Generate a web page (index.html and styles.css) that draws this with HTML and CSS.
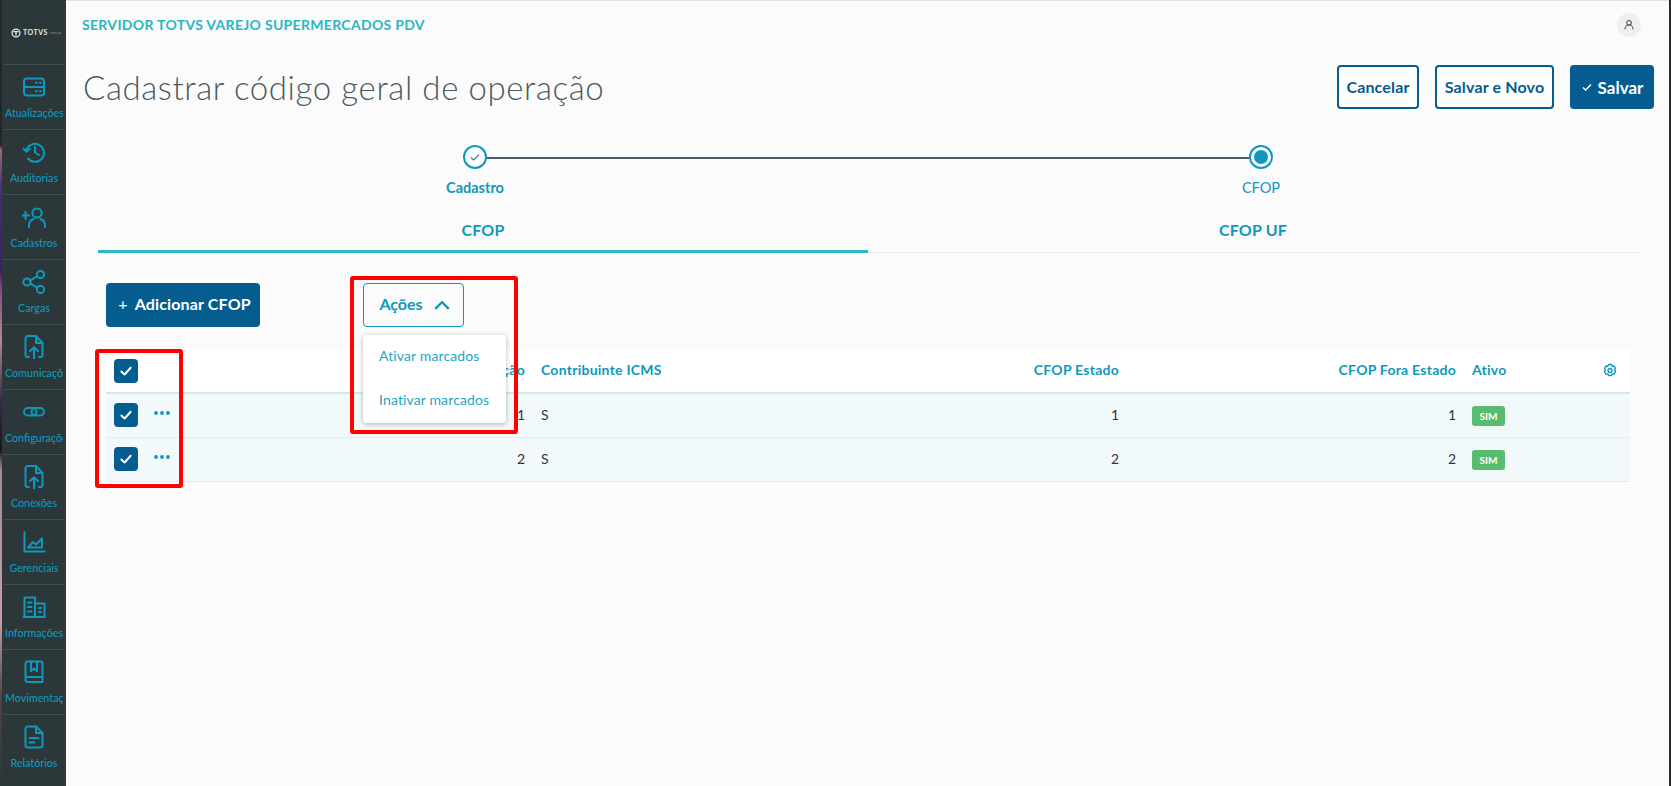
FILE: index.html
```html
<!DOCTYPE html>
<html lang="pt-BR">
<head>
<meta charset="utf-8">
<title>Cadastrar código geral de operação</title>
<link rel="stylesheet" href="styles.css">
</head>
<body>
<div class="wallpaper"></div>
<nav class="sidebar">
  <div class="logo">
    <svg class="logo-mark" viewBox="0 0 10 10"><circle cx="5" cy="5" r="3.9"/><path d="M2.5 3.6h5M5 3.6v4"/></svg>
    <span class="logo-name">TOTVS</span><span class="logo-sub">varejo</span>
  </div>
  <a class="nav-item"><svg viewBox="0 0 24 24"><rect x="2" y="3.5" width="20" height="17" rx="3"/><path d="M2 12h20M14 7.8h1M18 7.8h1M14 16.2h1M18 16.2h1"/></svg><span>Atualizações</span></a>
  <a class="nav-item"><svg viewBox="0 0 24 24"><path d="M4.3 10.5A9 9 0 1 1 6 18.5"/><path d="M1.5 8.5l3 3.2 3.2-3"/><path d="M13 7v5.5l4 2.5"/></svg><span>Auditorias</span></a>
  <a class="nav-item"><svg viewBox="0 0 24 24"><circle cx="15" cy="8" r="4.6"/><path d="M7 22v-1.5a7 7 0 0 1 4.5-6.5M23 22v-1.5a7 7 0 0 0-4.5-6.5M0 10.5h7M3.5 7v7"/></svg><span>Cadastros</span></a>
  <a class="nav-item"><svg viewBox="0 0 24 24"><circle cx="5" cy="12" r="3.6"/><circle cx="18.500" cy="4.600" r="3.600"/><circle cx="18.500" cy="19.400" r="3.600"/><path d="M8.200 10.300l7.100-3.900M8.200 13.700l7.100 3.900"/></svg><span>Cargas</span></a>
  <a class="nav-item"><svg viewBox="0 0 24 24"><path d="M7 22H5.500a2 2 0 0 1-2-2V3a2 2 0 0 1 2-2H14l6.500 7v12a2 2 0 0 1-2 2H17"/><path d="M14 1v7h6.500"/><path d="M12 24V12.500M8 16l4-3.800 4 3.800"/></svg><span>Comunicações</span></a>
  <a class="nav-item"><svg viewBox="0 0 24 24"><rect x="2" y="8" width="12.500" height="7.500" rx="3.700"/><rect x="9.500" y="8" width="12.500" height="7.500" rx="3.700"/></svg><span>Configurações</span></a>
  <a class="nav-item"><svg viewBox="0 0 24 24"><path d="M7 22H5.500a2 2 0 0 1-2-2V3a2 2 0 0 1 2-2H14l6.500 7v12a2 2 0 0 1-2 2H17"/><path d="M14 1v7h6.500"/><path d="M12 24V12.500M8 16l4-3.800 4 3.800"/></svg><span>Conexões</span></a>
  <a class="nav-item"><svg viewBox="0 0 24 24"><path d="M2.500 2v19.500H22.500"/><path d="M6 17.500l5-5.500 3 2.500 6-6v9z"/></svg><span>Gerenciais</span></a>
  <a class="nav-item"><svg viewBox="0 0 24 24"><path d="M2.500 22V2.500h10.500V22zM13 8.500h9.500V22H13M1.500 22h21.500"/><path d="M6 7.500h3.500M6 12h3.500M6 16.500h3.500M17 13h2M17 17h2"/></svg><span>Informações</span></a>
  <a class="nav-item"><svg viewBox="0 0 24 24"><path d="M3.500 19V3.500a2 2 0 0 1 2-2h13a2 2 0 0 1 2 2V22H5.500a2 2 0 0 1-2-2v-1a2 2 0 0 1 2-2h15"/><path d="M9 1.500v9.500l3-2.500 3 2.500V1.500"/></svg><span>Movimentações</span></a>
  <a class="nav-item"><svg viewBox="0 0 24 24"><path d="M5.500 1.500H14l6.500 6.500v12.500a2 2 0 0 1-2 2h-13a2 2 0 0 1-2-2v-17a2 2 0 0 1 2-2z"/><path d="M14 1.500V8h6.500M7.500 13h9M7.500 17.500h5"/></svg><span>Relatórios</span></a>
</nav>

<main class="main">
  <header class="topbar">
    <span class="server-name">SERVIDOR TOTVS VAREJO SUPERMERCADOS PDV</span>
    <span class="avatar"><svg viewBox="0 0 12 12"><circle cx="6" cy="3.800" r="2.300"/><path d="M2 10.500v-.5a4 4 0 0 1 8 0v.5"/></svg></span>
  </header>

  <section class="page-head">
    <h1 class="page-title">Cadastrar código geral de operação</h1>
    <div class="page-actions">
      <button class="btn btn-outline btn-cancel">Cancelar</button>
      <button class="btn btn-outline btn-new">Salvar e Novo</button>
      <button class="btn btn-solid btn-save"><svg class="btn-check" viewBox="0 0 12 12"><path d="M2 6.500l2.700 2.500L10 3.500"/></svg>Salvar</button>
    </div>
  </section>

  <section class="stepper">
    <div class="step-track">
      <span class="step-dot"><svg viewBox="0 0 12 12"><path d="M2 6.500l2.700 2.500L10 3.500"/></svg></span>
      <span class="step-line"></span>
      <span class="step-dot step-dot-active"><i></i></span>
    </div>
    <div class="step-labels">
      <span class="step-label step-label-done">Cadastro</span>
      <span class="step-label">CFOP</span>
    </div>
  </section>

  <div class="tabs">
    <div class="tab tab-active">CFOP</div>
    <div class="tab">CFOP UF</div>
  </div>

  <div class="toolbar">
    <button class="btn btn-solid btn-add"><span class="btn-plus">+</span>Adicionar CFOP</button>
    <div class="actions-wrap">
      <button class="btn-actions">Ações<svg viewBox="0 0 14 8"><path d="M1 7l6-6 6 6"/></svg></button>
      <ul class="menu">
        <li>Ativar marcados</li>
        <li>Inativar marcados</li>
      </ul>
    </div>
  </div>

  <table class="grid">
    <colgroup>
      <col class="c-check"><col class="c-more"><col class="c-code"><col class="c-icms"><col class="c-est"><col class="c-fora"><col class="c-active"><col class="c-gear">
    </colgroup>
    <thead>
      <tr>
        <th><span class="check"><svg viewBox="0 0 12 12"><path d="M2 6.500l2.800 2.500L10 3.200"/></svg></span></th>
        <th></th>
        <th class="num">Código Operação</th>
        <th>Contribuinte ICMS</th>
        <th class="num">CFOP Estado</th>
        <th class="num">CFOP Fora Estado</th>
        <th>Ativo</th>
        <th><svg class="gear" viewBox="0 0 16 16"><path d="M6.500 1.500h3l.7 1.800 1.900-.3 1.500 2.600-1.200 1.400 1.200 1.500-1.500 2.600-1.900-.3-.7 1.700h-3l-.7-1.700-1.900.3-1.500-2.600L3.600 7 2.400 5.600 3.900 3l1.900.3z"/><circle cx="8" cy="7.500" r="2"/></svg></th>
      </tr>
    </thead>
    <tbody>
      <tr>
        <td><span class="check"><svg viewBox="0 0 12 12"><path d="M2 6.500l2.800 2.500L10 3.200"/></svg></span></td>
        <td><svg class="dots" viewBox="0 0 16 16"><circle cx="2" cy="5" r="1.900"/><circle cx="8" cy="5" r="1.900"/><circle cx="14" cy="5" r="1.900"/></svg></td>
        <td class="num">1</td><td>S</td><td class="num">1</td><td class="num">1</td>
        <td><span class="badge">SIM</span></td><td></td>
      </tr>
      <tr>
        <td><span class="check"><svg viewBox="0 0 12 12"><path d="M2 6.500l2.800 2.500L10 3.200"/></svg></span></td>
        <td><svg class="dots" viewBox="0 0 16 16"><circle cx="2" cy="5" r="1.900"/><circle cx="8" cy="5" r="1.900"/><circle cx="14" cy="5" r="1.900"/></svg></td>
        <td class="num">2</td><td>S</td><td class="num">2</td><td class="num">2</td>
        <td><span class="badge">SIM</span></td><td></td>
      </tr>
    </tbody>
  </table>
</main>
<div class="frame-edge"></div>

<div class="mark mark-checks"></div>
<div class="mark mark-actions"></div>
</body>
</html>
```

FILE: styles.css
```css
* { box-sizing: border-box; }
html, body { margin: 0; height: 100%; }
body {
  display: flex;
  width: 1671px;
  height: 786px;
  overflow: hidden;
  position: relative;
  background: #fbfbfb;
  font-family: "Lato", "Noto Sans", sans-serif;
  color: #2c3739;
}

.wallpaper {
  width: 2px;
  flex: none;
  background: linear-gradient(180deg, #20282a 0, #20282a 145px, #9a6a72 150px, #4b2a78 190px, #3a1f6a 270px, #8a4a80 290px, #b08a98 340px, #3a2a4a 400px, #14181a 450px, #a88a90 470px, #c4a0a8 620px, #504048 700px, #2c3739 786px);
}
.frame-edge { width: 2px; flex: none; background: #2b2b2b; }

/* sidebar */
.sidebar {
  width: 64px;
  flex: none;
  background: #2c3739;
  display: flex;
  flex-direction: column;
  padding: 0 1px;
}
.logo {
  height: 65px;
  flex: none;
  border-bottom: 1px solid #414d4f;
  display: flex;
  align-items: center;
  padding-left: 8px;
  padding-top: 1px;
  color: #e4e8e8;
  overflow: hidden;
}
.logo-mark { width: 10px; height: 10px; fill: none; stroke: #e4e8e8; stroke-width: 1.300; flex: none; }
.logo-name { font-size: 7px; font-weight: 700; margin-left: 2px; letter-spacing: .5px; line-height: 1; }
.logo-sub { font-size: 4px; margin-left: 2px; color: #8f9a9b; letter-spacing: .1px; line-height: 1; }
.nav-item {
  height: 65px;
  flex: none;
  border-bottom: 1px solid #414d4f;
  display: flex;
  flex-direction: column;
  align-items: center;
  padding-top: 10px;
  color: #0e98bd;
}
.nav-item:last-child { border-bottom: 0; }
.nav-item svg {
  width: 24px;
  height: 24px;
  flex: none;
  fill: none;
  stroke: #0e98bd;
  stroke-width: 2;
  stroke-linecap: round;
  stroke-linejoin: round;
}
.nav-item span {
  width: 58px;
  margin-top: 6px;
  font-size: 10.700px;
  font-weight: 500;
  line-height: 15px;
  text-align: center;
  white-space: nowrap;
  overflow: hidden;
}

/* main */
.main {
  flex: 1;
  min-width: 0;
  border-top: 1px solid #e2e2e2;
}
.topbar {
  height: 47px;
  display: flex;
  align-items: center;
  justify-content: space-between;
  padding: 0 28px 0 16px;
}
.server-name {
  font-size: 14px;
  font-weight: 700;
  color: #29b6c5;
  letter-spacing: .31px;
}
.avatar {
  width: 24px;
  height: 24px;
  border-radius: 50%;
  background: #efefef;
  display: flex;
  align-items: center;
  justify-content: center;
}
.avatar svg { width: 12px; height: 12px; fill: none; stroke: #555f61; stroke-width: 1.100; }

.page-head {
  display: flex;
  align-items: center;
  justify-content: space-between;
  padding: 17px 15px 0 17px;
}
.page-title {
  margin: 0;
  font-size: 33px;
  font-weight: 300;
  line-height: 44px;
  color: #4a5a5e;
  letter-spacing: .6px;
}
.page-actions { display: flex; gap: 16px; }

.btn {
  height: 44px;
  border-radius: 4px;
  font: 700 16px "Lato", "Noto Sans", sans-serif;
  letter-spacing: .15px;
  display: inline-flex;
  align-items: center;
  justify-content: center;
  padding: 0;
  cursor: pointer;
}
.btn-outline { background: #fff; border: 2px solid #055c8f; color: #055c8f; padding-bottom: 2px; }
.btn-solid { background: #055c8f; border: 0; color: #fff; }
.btn-cancel { width: 82px; }
.btn-new { width: 119px; }
.btn-save { width: 84px; font-size: 17px; letter-spacing: 0; }
.btn-check { width: 12px; height: 12px; margin-right: 5px; fill: none; stroke: #fff; stroke-width: 1.300; }

/* stepper */
.stepper { margin-top: 36px; }
.step-track {
  display: flex;
  align-items: center;
  margin-left: 397px;
  width: 810px;
}
.step-dot {
  width: 24px;
  height: 24px;
  border-radius: 50%;
  border: 2px solid #0e98bd;
  background: #fff;
  flex: none;
  display: flex;
  align-items: center;
  justify-content: center;
}
.step-dot svg { width: 12px; height: 12px; fill: none; stroke: #2f7f9a; stroke-width: 1.100; }
.step-dot-active i { width: 14px; height: 14px; border-radius: 50%; background: #0e98bd; }
.step-line { flex: 1; height: 2px; background: #4a5c66; margin-top: 1px; }
.step-labels {
  display: flex;
  justify-content: space-between;
  margin: 11px 0 0 359px;
  width: 886px;
}
.step-label {
  width: 100px;
  text-align: center;
  font-size: 14.500px;
  line-height: 16px;
  color: #0e98bd;
}
.step-label-done { font-weight: 700; }

/* tabs */
.tabs {
  display: flex;
  margin: 15px 0 0 32px;
  width: 1540px;
}
.tab {
  flex: 1;
  height: 42px;
  padding-top: 9px;
  text-align: center;
  font-size: 16px;
  font-weight: 700;
  line-height: 20px;
  letter-spacing: .2px;
  color: #0e98bd;
  border-bottom: 1px solid #e9ebeb;
}
.tab-active { border-bottom: 3px solid #29b6c5; }

/* toolbar */
.toolbar {
  display: flex;
  align-items: flex-start;
  margin: 30px 0 0 40px;
}
.btn-add { width: 154px; font-size: 16px; padding: 0 0 3px 3px; }
.btn-plus { font-size: 16px; font-weight: 400; margin-right: 7px; }
.actions-wrap { position: relative; margin-left: 103px; }
.btn-actions {
  width: 101px;
  height: 44px;
  background: transparent;
  border: 1px solid #0e98bd;
  border-radius: 4px;
  color: #0e98bd;
  font: 700 16px "Lato", "Noto Sans", sans-serif;
  display: flex;
  align-items: center;
  justify-content: center;
  gap: 11px;
  padding: 0 0 4px 2px;
}
.btn-actions svg { width: 16px; height: 9px; margin-top: 4px; fill: none; stroke: #0e98bd; stroke-width: 2; }
.menu {
  position: absolute;
  top: 52px;
  left: 0;
  z-index: 2;
  width: 143px;
  margin: 0;
  padding: 0;
  list-style: none;
  background: #fff;
  border-radius: 3px;
  box-shadow: 0 1px 5px rgba(0, 0, 0, .28);
}
.menu li {
  height: 44px;
  padding: 0 0 0 16px;
  line-height: 42px;
  font-size: 14px;
  letter-spacing: .13px;
  color: #1fa3c6;
  white-space: nowrap;
}

/* table */
.grid {
  margin: 22px 0 0 40px;
  width: 1524px;
  table-layout: fixed;
  border-collapse: separate;
  border-spacing: 0;
  font-size: 14px;
}
.c-check { width: 40px; }
.c-more { width: 40px; }
.c-code { width: 347px; }
.c-icms { width: 267px; }
.c-est { width: 327px; }
.c-fora { width: 337px; }
.c-active { width: 126px; }
.c-gear { width: 40px; }
.grid th {
  height: 45px;
  padding: 0 8px;
  background: #fff;
  border-bottom: 2px solid #cfe9f2;
  color: #0e98bd;
  font-weight: 700;
  letter-spacing: .25px;
  text-align: left;
  vertical-align: middle;
  white-space: nowrap;
}
.grid th:nth-child(n+3):nth-child(-n+7) { padding-bottom: 2px; }
.grid td {
  height: 44px;
  padding: 0 8px;
  background: #f2f9fb;
  border-bottom: 1px solid #e7eced;
  vertical-align: middle;
}
.grid td:nth-child(n+3):nth-child(-n+6),
.grid td:first-child { padding-bottom: 2px; }
.grid .num { text-align: right; }
.check {
  display: flex;
  align-items: center;
  justify-content: center;
  width: 24px;
  height: 24px;
  border-radius: 4px;
  background: #055c8f;
}
.check svg { width: 14px; height: 14px; fill: none; stroke: #fff; stroke-width: 1.700; stroke-linecap: round; stroke-linejoin: round; }
.dots { display: block; width: 16px; height: 16px; fill: #0e98bd; }
.gear { display: block; width: 16px; height: 16px; margin-left: 4px; fill: none; stroke: #0e98bd; stroke-width: 1.300; stroke-linejoin: round; }
.badge {
  display: flex;
  width: 33px;
  height: 20px;
  align-items: center;
  justify-content: center;
  border-radius: 3px;
  background: #58bb6f;
  color: #fff;
  font-size: 10px;
  font-weight: 700;
}

/* red review annotations drawn over the screenshot */
.mark {
  position: absolute;
  z-index: 3;
  border: 4px solid #f00;
  border-radius: 3px;
  pointer-events: none;
}
.mark-checks { left: 95px; top: 349px; width: 88px; height: 139px; }
.mark-actions { left: 350px; top: 276px; width: 168px; height: 158px; }
```
